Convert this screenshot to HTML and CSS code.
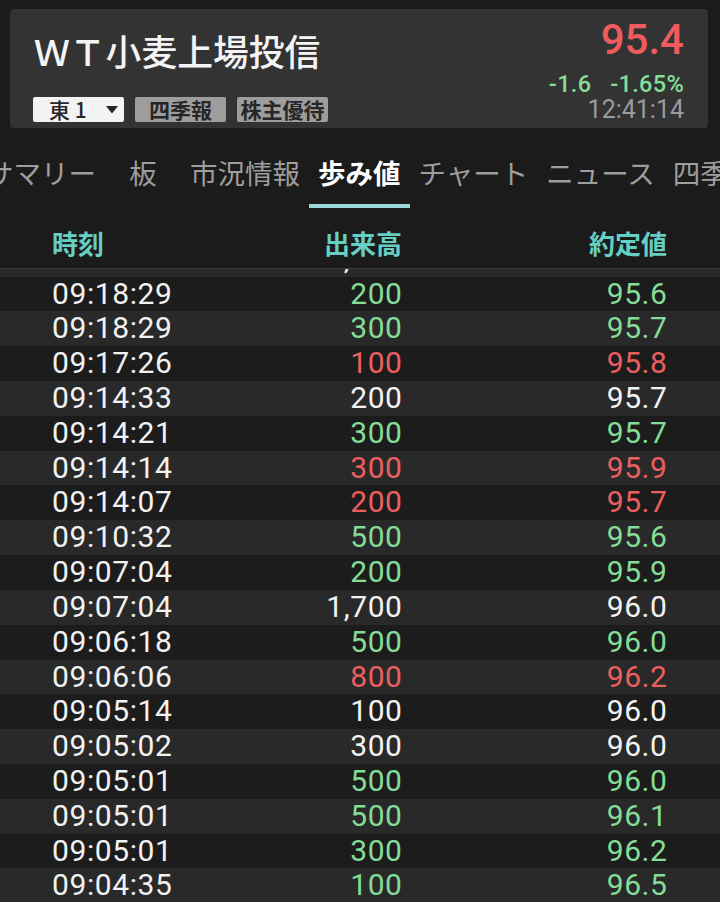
FILE: index.html
```html
<!DOCTYPE html>
<html lang="ja">
<head>
<meta charset="utf-8">
<title>WT小麦上場投信 歩み値</title>
<link rel="stylesheet" href="styles.css">
</head>
<body>
<div class="page">
  <section class="card">
    <div class="card-left">
      <h1 class="title">ＷＴ小麦上場投信</h1>
      <div class="tags">
        <span class="tag tag-select"><span class="sel-text">東 1</span><svg class="caret" width="12" height="8" viewBox="0 0 12 8"><polygon points="0,0 12,0 6,7.5" fill="#222"/></svg></span>
        <span class="tag tag-grey">四季報</span>
        <span class="tag tag-grey">株主優待</span>
      </div>
    </div>
    <div class="card-right">
      <div class="price">95.4</div>
      <div class="change"><span>-1.6</span><span class="pct">-1.65%</span></div>
      <div class="clock">12:41:14</div>
    </div>
  </section>

  <nav class="tabs">
    <span class="tab">サマリー</span>
    <span class="tab tab-wide">板</span>
    <span class="tab">市況情報</span>
    <span class="tab active">歩み値</span>
    <span class="tab">チャート</span>
    <span class="tab">ニュース</span>
    <span class="tab">四季報</span>
  </nav>

  <div class="cols">
    <span class="col-time">時刻</span>
    <span class="col-num">出来高</span>
    <span class="col-num">約定値</span>
  </div>

  <div class="list">
    <div class="row partial">
      <div class="partial-inner"><span class="t">09:18:42</span><span class="n">1,000</span><span class="n">95.6</span></div>
    </div>
    <div class="row"><span class="t">09:18:29</span><span class="n g">200</span><span class="n g">95.6</span></div>
    <div class="row"><span class="t">09:18:29</span><span class="n g">300</span><span class="n g">95.7</span></div>
    <div class="row"><span class="t">09:17:26</span><span class="n r">100</span><span class="n r">95.8</span></div>
    <div class="row"><span class="t">09:14:33</span><span class="n">200</span><span class="n">95.7</span></div>
    <div class="row"><span class="t">09:14:21</span><span class="n g">300</span><span class="n g">95.7</span></div>
    <div class="row"><span class="t">09:14:14</span><span class="n r">300</span><span class="n r">95.9</span></div>
    <div class="row"><span class="t">09:14:07</span><span class="n r">200</span><span class="n r">95.7</span></div>
    <div class="row"><span class="t">09:10:32</span><span class="n g">500</span><span class="n g">95.6</span></div>
    <div class="row"><span class="t">09:07:04</span><span class="n g">200</span><span class="n g">95.9</span></div>
    <div class="row"><span class="t">09:07:04</span><span class="n">1,700</span><span class="n">96.0</span></div>
    <div class="row"><span class="t">09:06:18</span><span class="n g">500</span><span class="n g">96.0</span></div>
    <div class="row"><span class="t">09:06:06</span><span class="n r">800</span><span class="n r">96.2</span></div>
    <div class="row"><span class="t">09:05:14</span><span class="n">100</span><span class="n">96.0</span></div>
    <div class="row"><span class="t">09:05:02</span><span class="n">300</span><span class="n">96.0</span></div>
    <div class="row"><span class="t">09:05:01</span><span class="n g">500</span><span class="n g">96.0</span></div>
    <div class="row"><span class="t">09:05:01</span><span class="n g">500</span><span class="n g">96.1</span></div>
    <div class="row"><span class="t">09:05:01</span><span class="n g">300</span><span class="n g">96.2</span></div>
    <div class="row"><span class="t">09:04:35</span><span class="n g">100</span><span class="n g">96.5</span></div>
    <div class="row"><span class="t">09:04:12</span><span class="n g">200</span><span class="n g">96.4</span></div>
  </div>
</div>
</body>
</html>
```

FILE: styles.css
```css
html, body {
  margin: 0;
  padding: 0;
  background: #1b1b1b;
}
body {
  width: 720px;
  height: 902px;
  overflow: hidden;
  font-family: "Noto Sans CJK JP", "Noto Sans", sans-serif;
  color: #f2f2f2;
}
.page {
  width: 720px;
  height: 902px;
  overflow: hidden;
  display: flex;
  flex-direction: column;
}

/* header card */
.card {
  flex: none;
  margin: 9px 12px 0 10px;
  height: 119px;
  box-sizing: border-box;
  padding: 10px 24px 6px 24px;
  background: #333333;
  border-radius: 4px;
  display: flex;
  justify-content: space-between;
}
.card-left {
  display: flex;
  flex-direction: column;
}
.title {
  margin: 10px 0 0 0;
  font-size: 35.8px;
  line-height: 42px;
  font-weight: 500;
  color: #f4f4f4;
}
.tags {
  margin-top: 26px;
  display: flex;
  gap: 11px;
  margin-left: -1px;
}
.tag {
  width: 91px;
  height: 25px;
  box-sizing: border-box;
  border-radius: 2px;
  font-size: 21px;
  line-height: 25px;
  font-weight: 700;
  color: #262626;
  display: flex;
  align-items: center;
  justify-content: center;
}
.tag-select {
  background: #f3f3f3;
  justify-content: space-between;
  padding: 0 6px 0 16px;
  font-weight: 500;
}
.sel-text {
  white-space: pre;
}
.caret {
  display: block;
  margin-top: 1px;
}
.tag-grey {
  background: #9d9d9d;
}

.card-right {
  display: flex;
  flex-direction: column;
  align-items: flex-end;
  font-family: Roboto, "Noto Sans", sans-serif;
}
.price {
  font-size: 42px;
  line-height: 42px;
  font-weight: 500;
  color: #f05c5c;
  margin-bottom: 10px;
}
.change {
  font-size: 23.5px;
  line-height: 26px;
  font-weight: 500;
  color: #84de98;
  display: flex;
  gap: 19px;
  letter-spacing: 0.3px;
}
.clock {
  font-size: 25px;
  line-height: 26px;
  color: #9b9b9b;
}

/* tabs */
.tabs {
  flex: none;
  margin: 10px 0 0 -23px;
  display: flex;
  white-space: nowrap;
}
.tab {
  flex: none;
  padding: 14px 9px 12px 9px;
  font-size: 27.5px;
  line-height: 40px;
  color: #9e9e9e;
  border-bottom: 4px solid transparent;
  text-align: center;
}
.tab-wide {
  min-width: 58px;
}
.tab.active {
  color: #ffffff;
  font-weight: 700;
  border-bottom-color: #9dd7d7;
}

/* column header */
.cols {
  flex: none;
  display: grid;
  grid-template-columns: 170px 180px 1fr;
  padding: 22px 53px 12px 52px;
  font-size: 26px;
  line-height: 26px;
  font-weight: 700;
  color: #66cfc4;
  border-bottom: 1px solid #383838;
}
.col-num {
  text-align: right;
}

/* list */
.list {
  flex: 1;
  overflow: hidden;
}
.row,
.partial-inner {
  display: grid;
  grid-template-columns: 170px 180px 1fr;
  padding: 0 53px 0 52px;
  height: 34.82px;
  font-family: Roboto, "Noto Sans", sans-serif;
  font-size: 30px;
  line-height: 34.82px;
  letter-spacing: 0.6px;
  color: #f2f2f2;
  background: #1c1c1c;
}
.row:nth-child(odd) {
  background: #292929;
}
.row.partial {
  display: block;
  padding: 0;
  height: 7.6px;
  overflow: hidden;
}
.partial-inner {
  background: transparent;
  margin-top: -27.2px;
}
.n {
  text-align: right;
  margin-right: -0.6px;
}
.g {
  color: #84dc96;
}
.r {
  color: #ec5f5f;
}
```
